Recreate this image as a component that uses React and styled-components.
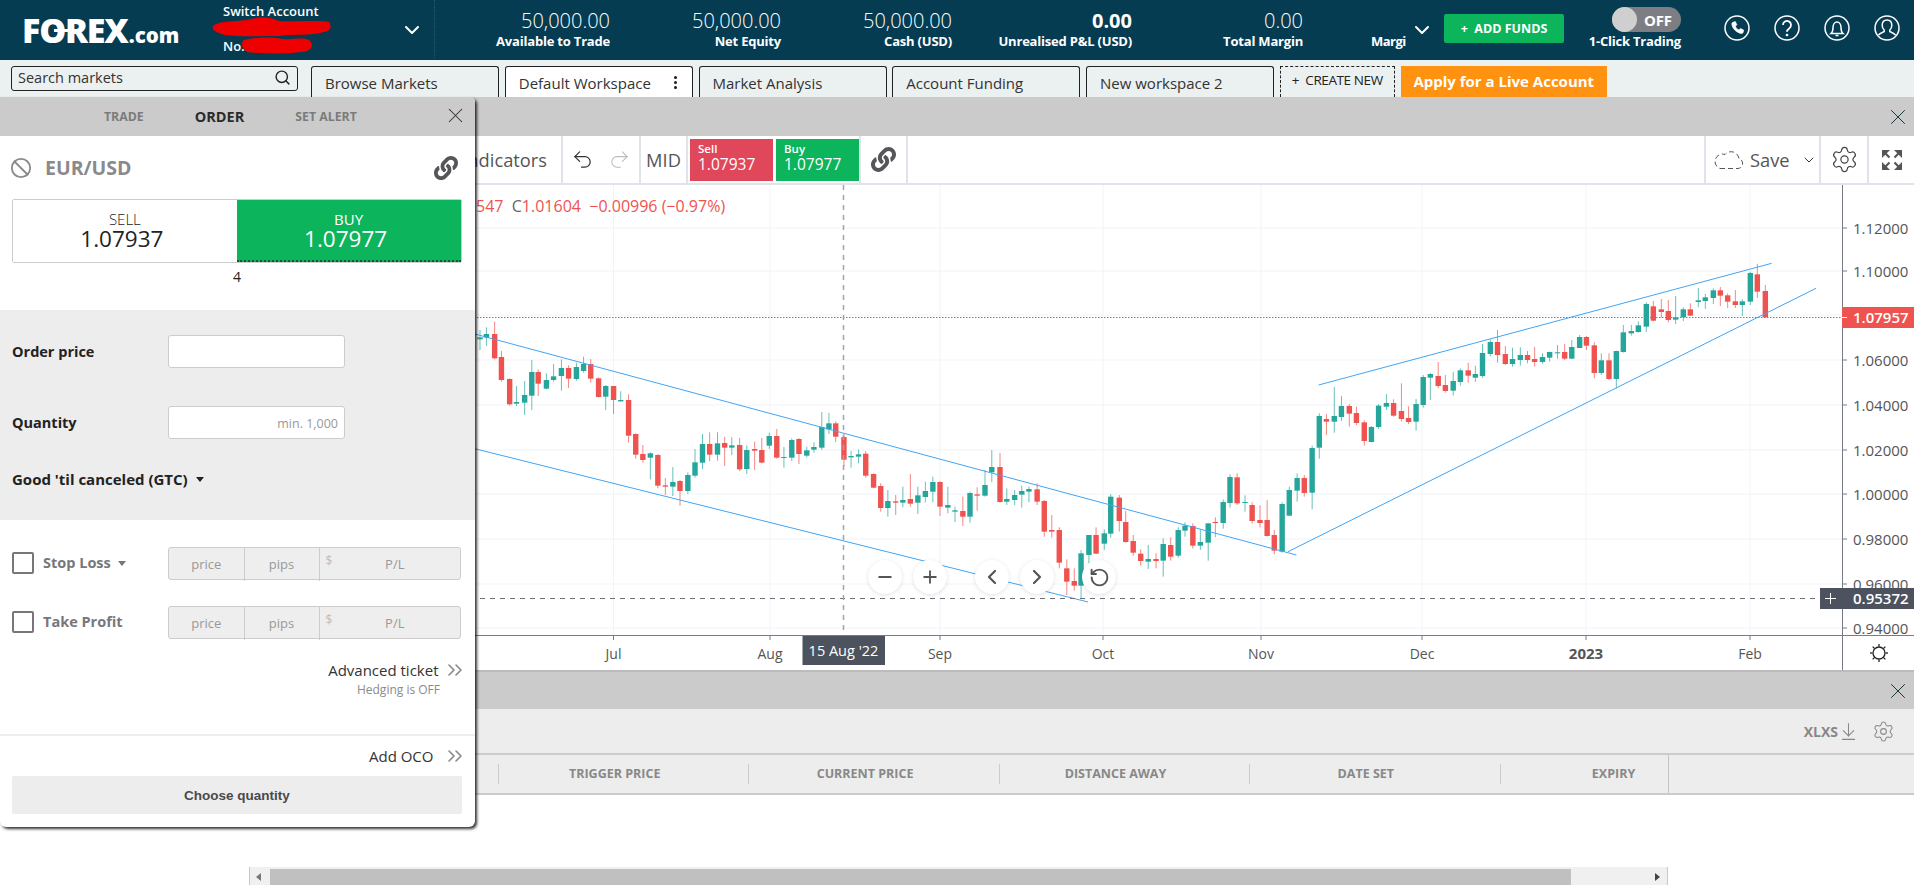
import styled, { createGlobalStyle } from 'styled-components';
import { X, Ban, Search, Undo2, Redo2, Settings, Minus, Plus, ChevronLeft, ChevronRight, RotateCcw, ChevronDown, ChevronsRight, ArrowDownToLine, EllipsisVertical } from 'lucide-react';
import { FaLink } from 'react-icons/fa';

const GlobalStyle = createGlobalStyle`
  html, body { margin: 0; padding: 0; height: 100%; overflow: hidden; background: #fff; }
  body { font-family: "Open Sans", "Liberation Sans", sans-serif; color: #222; }
  * { box-sizing: border-box; }
`;

// candles read off the chart: [colour, x, high, bodyTop, bodyBottom, low]
const place = (rows, x0, sx, y0) =>
  rows.map(([c, x, h, t, b, l]) => ({ c, x: x0 + x / sx, h: y0 + h / 3, t: y0 + t / 3, b: y0 + b / 3, l: y0 + l / 3 }));

const candles = [
  ...place([
    ['g',0,90,112,118,150],['g',18,82,102,113,137],['r',41,65,102,175,178],['r',60,153,171,240,245],['r',83,235,237,313,317],
    ['g',102,258,306,311,318],['g',125,243,285,308,345],['g',145,180,216,287,330],['r',163,208,216,251,288],['g',186,220,240,266,268],
    ['g',206,192,229,240,245],['g',228,178,204,228,272],['r',248,196,204,236,264],['g',270,188,201,237,242],['g',290,170,192,213,218],
    ['r',310,177,192,236,248],['r',332,232,235,291,293],['g',352,255,258,290,330],['r',374,258,258,300,342],['g',394,274,300,304,306],
    ['r',416,283,300,407,428],['r',436,400,402,464,476],['r',456,435,462,480,488],['g',477,457,460,473,538],['r',498,462,465,557,565],
    ['r',519,534,556,560,585],['g',540,501,546,560,588],['r',560,540,543,573,617],['g',582,517,525,573,582],['g',602,447,487,527,533],
    ['g',623,402,432,488,507],['r',643,397,432,464,484],['g',665,397,430,464,482],['r',685,410,429,443,498],['g',705,412,436,443,465],
    ['r',727,414,435,508,513],['g',747,436,450,507,522],['r',769,425,447,452,510],['r',789,414,450,488,490],['g',810,398,408,437,447],
    ['r',831,387,408,473,476],['g',851,441,471,473,503],['g',873,415,420,473,483],['r',893,414,417,462,492],['g',915,440,451,467,472],
    ['g',935,427,441,449,458],['g',957,336,381,443,450],['g',977,339,370,388,402],['r',996,364,370,410,426],['r',1019,400,411,479,500],
    ['g',1039,453,468,472,503],['g',1060,448,463,470,490],['r',1080,453,461,527,533],['r',1102,520,522,563,565],['r',1122,550,558,624,635],
    ['g',1142,570,603,624,650],['r',1164,585,604,608,645],['g',1184,560,600,608,622],['r',1205,522,597,611,620],['g',1226,560,586,608,642],
    ['g',1247,545,573,591,607],['g',1268,530,546,575,607],['r',1288,544,546,620,648],['g',1310,560,615,623,640],['g',1330,620,631,635,666],
    ['r',1352,590,633,650,678],['g',1372,575,579,650,668],['r',1392,562,583,587,632],['g',1414,510,555,587,590],['g',1433,450,501,517,546],
    ['r',1456,459,501,606,608],['g',1475,565,597,605,615],['g',1497,570,585,600,615],['g',1517,557,573,584,623],['g',1537,560,567,575,607],
    ['r',1560,550,568,605,615],
  ], 480, 2.8, 300),
  ...place([
    ['r',12,780,783,875,890],['r',33,825,870,875,893],['r',54,862,870,968,985],['r',75,958,985,1025,1065],['r',96,985,1023,1037,1052],
    ['g',115,930,940,1037,1075],['g',137,885,885,945,970],['r',157,862,885,941,942],['g',180,868,880,911,930],['g',198,762,770,881,893],
    ['r',222,765,773,843,875],['r',240,813,846,906,908],['r',261,885,903,938,947],['r',282,928,941,963,977],['g',303,915,957,965,987],
    ['r',325,940,957,963,985],['g',345,895,912,962,1010],['r',366,892,915,950,962],['g',387,862,870,947,953],['g',406,847,857,872,890],
    ['r',428,850,858,917,926],['g',449,868,906,917,930],['g',471,850,850,908,962],['r',491,832,846,849,892],['g',513,778,786,849,866],
    ['g',532,703,711,789,803],['r',552,700,712,790,795],['g',574,766,786,789,815],['r',594,787,795,843,851],['r',616,796,840,849,862],
    ['r',636,780,840,888,890],['r',656,870,885,932,943],['g',678,787,792,935,938],['g',698,740,750,827,828],['g',720,700,714,752,785],
    ['r',740,705,714,759,770],['g',762,617,624,758,808],['g',782,520,528,623,656],['r',802,522,537,545,585],['g',824,441,528,545,578],
    ['g',844,468,498,531,543],['r',866,492,498,521,560],['r',886,500,519,549,555],['r',908,541,547,603,617],['g',928,558,561,606,607],
    ['g',948,492,497,561,567],['g',970,462,489,500,510],['r',990,478,489,527,530],['r',1012,430,513,537,545],['r',1032,499,534,546,552],
    ['g',1053,477,492,545,572],['g',1073,405,411,495,503],['g',1093,399,402,413,480],['r',1115,366,408,438,445],['r',1135,405,435,453,458],
    ['g',1157,396,423,452,467],['g',1177,385,391,426,437],['r',1199,368,391,407,428],['g',1219,377,402,413,426],['g',1239,312,339,408,413],
    ['g',1261,298,306,342,349],['r',1281,270,306,345,368],['r',1303,318,342,372,375],['g',1323,323,357,372,380],['g',1345,322,345,360,377],
    ['r',1365,333,345,360,370],['r',1385,321,357,366,380],['g',1407,340,351,366,371],['g',1427,335,336,353,365],['g',1449,315,337,339,356],
    ['r',1469,312,336,356,360],['g',1489,300,321,356,357],['g',1511,285,291,324,324],['r',1530,288,291,317,330],['r',1552,307,316,399,415],
  ], 1040, 2.8, 240),
  ...place([
    ['g',304,520,541,579,585],['r',327,520,541,597,600],['g',349,512,513,597,625],['g',370,435,457,516,518],['g',394,435,453,460,467],
    ['g',415,424,436,456,458],['g',439,367,372,440,456],['r',460,363,379,422,424],['r',484,357,388,396,413],['r',505,360,393,420,427],
    ['g',527,348,412,419,432],['g',550,382,388,412,423],['r',571,370,388,407,408],['g',595,324,361,366,382],['g',616,342,352,363,387],
    ['g',640,325,331,354,372],['r',661,321,331,347,378],['r',683,340,346,365,384],['r',706,330,364,375,384],['g',727,358,364,375,408],
    ['g',751,275,279,365,375],['r',772,252,283,335,354],['r',796,315,333,412,412],
  ], 1500, 3, 180),
];

const trendLines = [
  [460, 330, 1296.4, 555],
  [460, 445, 1088, 602],
  [1318.6, 385, 1771.7, 263.3],
  [1288, 551.7, 1816, 288.3],
];

const priceTicks = [
  ['1.12000', 228], ['1.10000', 271], ['1.06000', 360], ['1.04000', 405], ['1.02000', 450],
  ['1.00000', 494], ['0.98000', 539], ['0.96000', 584], ['0.94000', 628],
];
const timeTicks = [['Jul', 613.5], ['Aug', 770], ['Sep', 940], ['Oct', 1103], ['Nov', 1261], ['Dec', 1422], ['2023', 1586], ['Feb', 1750]];

const stats = [
  { w: 175, value: '50,000.00', label: 'Available to Trade' },
  { w: 171, value: '50,000.00', label: 'Net Equity' },
  { w: 171, value: '50,000.00', label: 'Cash (USD)' },
  { w: 180, value: '0.00', label: 'Unrealised P&L (USD)', strong: true },
  { w: 171, value: '0.00', label: 'Total Margin' },
];

const workspaceTabs = ['Browse Markets', 'Default Workspace', 'Market Analysis', 'Account Funding', 'New workspace 2'];
const columns = ['TRIGGER PRICE', 'CURRENT PRICE', 'DISTANCE AWAY', 'DATE SET'];

const Page = styled.div`
  position: relative;
  height: 885px;
  width: 1914px;
  overflow: hidden;
  display: flex;
  flex-direction: column;
`;

const TopBar = styled.header`
  height: 60px;
  flex: none;
  background: #053c52;
  color: #fff;
  display: flex;
  align-items: stretch;
`;

const LogoSlot = styled.div`
  width: 223px;
  padding-left: 22px;
  display: flex;
  align-items: center;
`;

const Logo = styled.div`
  display: flex;
  align-items: baseline;
  font-weight: 800;
  font-size: 34px;
  letter-spacing: -1.2px;
  line-height: 1;
  span { font-size: 20.5px; letter-spacing: 0; margin-left: 1px; }
`;

const LogoO = styled.b`
  position: relative;
  font-weight: 800;
  &::after {
    content: '';
    position: absolute;
    left: 15px;
    right: -3px;
    top: 16px;
    height: 3px;
    background: #fff;
  }
`;

const Account = styled.div`
  position: relative;
  width: 212px;
  border-right: 1px dotted #2a5a6e;
  margin-bottom: 2px;
  font-size: 13px;
  font-weight: 600;
  line-height: 18px;
  padding-top: 2px;
  display: flex;
  flex-direction: column;
`;

const RedactedLine = styled.div`
  height: 17px;
`;

const Scribble = styled.svg`
  position: absolute;
  left: -12px;
  top: 16px;
`;

const AccountCaret = styled(ChevronDown)`
  position: absolute;
  left: 177px;
  top: 18px;
`;

const Stat = styled.div`
  width: ${(p) => p.$w}px;
  flex: none;
  text-align: right;
  padding-top: 9px;
`;

const StatValue = styled.div`
  font-size: 20px;
  font-weight: ${(p) => (p.$strong ? 700 : 300)};
  line-height: 24px;
`;

const StatLabel = styled.div`
  font-size: 13px;
  font-weight: 700;
  line-height: 17px;
  letter-spacing: -0.2px;
`;

const CutLabel = styled(StatLabel)`
  width: 32px;
  flex: none;
  margin: 33px 0 0 68px;
  white-space: nowrap;
  letter-spacing: -0.5px;
`;

const TopCaret = styled(ChevronDown)`
  margin: 18px 0 0 7px;
  flex: none;
`;

const AddFunds = styled.button`
  width: 120px;
  height: 29px;
  margin: 14px 0 0 10px;
  border: 0;
  border-radius: 2px;
  background: #0cb45c;
  color: #fff;
  font: 700 12.5px "Open Sans", sans-serif;
`;

const OneClick = styled.div`
  width: 92px;
  margin: 7px 0 0 25px;
  display: flex;
  flex-direction: column;
  align-items: flex-end;
  font-size: 13px;
  line-height: 18px;
  font-weight: 700;
  letter-spacing: -0.2px;
  white-space: nowrap;
`;

const Toggle = styled.div`
  width: 69px;
  height: 25px;
  border-radius: 13px;
  background: #7d7e84;
  display: flex;
  align-items: center;
  font-size: 15px;
`;

const Knob = styled.i`
  width: 25px;
  height: 25px;
  border-radius: 50%;
  background: #cfcfcf;
  margin-right: 7px;
`;

const TopIcons = styled.div`
  margin: 15px 0 0 43px;
  display: flex;
  gap: 24px;
`;

const RoundIcon = styled.svg`
  width: 26px;
  height: 26px;
  fill: none;
  stroke: #fff;
  stroke-width: 1.5;
`;

const TabRow = styled.nav`
  height: 37px;
  flex: none;
  background: #ebf0f0;
  padding: 6px 0 0 11px;
  display: flex;
  align-items: flex-start;
  font-size: 15px;
`;

const SearchBox = styled.div`
  width: 287px;
  height: 25px;
  border: 1px solid #222;
  border-radius: 3px;
  padding: 0 6px 2px;
  margin-right: 13px;
  display: flex;
  align-items: center;
  justify-content: space-between;
  font-size: 14.5px;
  color: #333;
`;

const Tab = styled.div`
  width: 188px;
  height: 31px;
  margin-right: 5.75px;
  padding: 1px 13px 0;
  border: 1px solid #222;
  border-bottom: 0;
  border-radius: 3px 3px 0 0;
  background: ${(p) => (p.$active ? '#fff' : '#ebf0f0')};
  display: flex;
  justify-content: space-between;
  align-items: center;
  white-space: nowrap;
  color: #333;
  svg { margin-right: -5px; }
`;

const CreateNew = styled.div`
  width: 115px;
  height: 31px;
  margin-right: 6px;
  padding-bottom: 4px;
  border: 1px dashed #222;
  border-bottom: 0;
  font-size: 13.5px;
  display: flex;
  align-items: center;
  justify-content: center;
  white-space: nowrap;
  letter-spacing: -0.4px;
`;

const ApplyLive = styled.div`
  width: 206px;
  height: 31px;
  padding-bottom: 2px;
  background: #ff9211;
  color: #fff;
  font-size: 15px;
  font-weight: 700;
  display: flex;
  align-items: center;
  justify-content: center;
`;

const GreyBar = styled.div`
  height: ${(p) => p.$h}px;
  flex: none;
  background: #cbcbcb;
  border-top: ${(p) => (p.$edge ? '2px solid #bcbcbc' : '0')};
  display: flex;
  align-items: center;
  justify-content: flex-end;
  padding-right: 3px;
`;

const ChartToolbar = styled.div`
  height: 49px;
  flex: none;
  display: flex;
  align-items: stretch;
  border-bottom: 2px solid #e0e3eb;
  background: #fff;
  color: #555;
`;

const ToolGroup = styled.div`
  width: ${(p) => p.$w}px;
  flex: none;
  display: flex;
  align-items: center;
  justify-content: ${(p) => p.$justify || 'center'};
  gap: ${(p) => p.$gap || 0}px;
  padding: ${(p) => p.$pad || 0};
  border-right: ${(p) => (p.$noBorder ? '0' : '2px solid #e0e3eb')};
  font-size: 18.3px;
  white-space: nowrap;
`;

const ToolSpacer = styled.div`
  flex: 1;
  border-right: 2px solid #e0e3eb;
`;

const PriceChip = styled.div`
  width: 83px;
  height: 42px;
  background: ${(p) => p.$bg};
  color: #fff;
  padding: 4px 8px;
  font-size: 15.5px;
  line-height: 18px;
  small { display: block; font-size: 11.5px; line-height: 12px; font-weight: 600; }
`;

const SaveCaret = styled(ChevronDown)`
  margin-left: 6px;
`;

const ChartArea = styled.div`
  position: relative;
  height: 485px;
  flex: none;
  background: #fff;
  svg.chart { display: block; }
`;

const AxisText = styled.text`
  font-family: "Open Sans", sans-serif;
  font-size: ${(p) => p.$size || 15}px;
  fill: ${(p) => p.$fill || '#555'};
  font-weight: ${(p) => p.$weight || 400};
`;

const Legend = styled.div`
  position: absolute;
  left: 476px;
  top: 10px;
  font-size: 16px;
  color: #ef5350;
  white-space: pre;
  em { font-style: normal; color: #666; }
`;

const ZoomBar = styled.div`
  position: absolute;
  left: 868px;
  top: 375px;
  display: flex;
  gap: 11px;
`;

const ZoomButton = styled.button`
  width: 34px;
  height: 34px;
  padding: 0;
  border: 0;
  border-radius: 50%;
  background: #fff;
  color: #555;
  box-shadow: 0 1px 4px rgba(0, 0, 0, 0.12);
  display: flex;
  align-items: center;
  justify-content: center;
  margin-left: ${(p) => (p.$apart ? '17px' : 0)};
`;

const OrdersToolbar = styled.div`
  height: 44px;
  flex: none;
  background: #ededed;
  display: flex;
  align-items: center;
  justify-content: flex-end;
  gap: 13px;
  padding-right: 19px;
  color: #888;
  font-size: 14px;
  font-weight: 700;
`;

const XlxsLink = styled.div`
  display: flex;
  align-items: center;
`;

const OrdersHead = styled.div`
  height: 42px;
  flex: none;
  background: #ededed;
  border-top: 2px solid #ccc;
  border-bottom: 2px solid #ccc;
  display: grid;
  grid-template-columns: 498px repeat(4, 250.4px) 168px 1fr;
  align-items: center;
  color: #888;
  font-size: 12.5px;
  font-weight: 700;
`;

const HeadCell = styled.div`
  height: 20px;
  line-height: 20px;
  border-left: ${(p) => (p.$first ? '0' : '1px solid #ccc')};
  text-align: center;
  white-space: nowrap;
  padding: 0 ${(p) => p.$right || 18}px 0 ${(p) => p.$left || 0}px;
`;

const HeadEnd = styled.div`
  align-self: stretch;
  border-left: 1px solid #c4c4c4;
`;

const OrdersBody = styled.div`
  flex: 1;
  background: #fff;
`;

const ScrollTrack = styled.div`
  height: 18px;
  flex: none;
  margin-left: 249px;
  width: 1419px;
  background: #f0f0f0;
  border-right: 1px solid #c8c8c8;
  border-left: 1px solid #c8c8c8;
  padding-top: 2px;
  display: flex;
  align-items: center;
`;

const ScrollThumb = styled.div`
  flex: 1;
  height: 16px;
  background: #c0c0c0;
  margin: 0 96px 0 20px;
`;

const ScrollArrow = styled.i`
  position: absolute;
  left: ${(p) => (p.$right ? '1655px' : '256px')};
  border: 4px solid transparent;
  border-right: ${(p) => (p.$right ? '0' : '5px solid #777')};
  border-left: ${(p) => (p.$right ? '5px solid #444' : '0')};
`;

const OrderPanel = styled.aside`
  position: absolute;
  left: 0;
  top: 97px;
  width: 475px;
  height: 730px;
  background: #fff;
  border-radius: 0 5px 6px 6px;
  box-shadow: 2px 2px 3px rgba(0, 0, 0, 0.8);
  display: flex;
  flex-direction: column;
  overflow: hidden;
`;

const PanelTabs = styled.div`
  height: 39px;
  flex: none;
  background: #cbcbcb;
  padding: 0 7px 0 104px;
  display: flex;
  align-items: center;
  gap: 51px;
`;

const PanelTab = styled.div`
  font-size: ${(p) => (p.$active ? 14.5 : 12.3)}px;
  font-weight: 700;
  color: ${(p) => (p.$active ? '#2b2b2b' : '#7b7b7b')};
`;

const PanelClose = styled(X)`
  margin-left: auto;
  margin-top: -3px;
  color: #333;
`;

const SymbolRow = styled.div`
  height: 63px;
  flex: none;
  padding: 0 17px 0 10px;
  display: flex;
  align-items: center;
  gap: 13px;
  font-size: 19.5px;
  font-weight: 700;
  color: #8a8a8c;
  svg:last-child { margin-left: auto; color: #55565a; }
`;

const QuoteBox = styled.div`
  height: 64px;
  flex: none;
  margin: 0 13.5px 0 12px;
  border: 1px solid #ccc;
  border-radius: 2px;
  display: grid;
  grid-template-columns: 1fr 1fr;
  text-align: center;
`;

const Quote = styled.div`
  padding-top: 12px;
  font-size: 15px;
  font-weight: ${(p) => (p.$buy ? 400 : 300)};
  line-height: 15px;
  color: ${(p) => (p.$buy ? '#fff' : '#222')};
  background: ${(p) => (p.$buy ? '#0cb45c' : '#fff')};
  border-bottom: ${(p) => (p.$buy ? '2px dotted #0a5c33' : 0)};
  b { display: block; font-size: 22.5px; font-weight: 400; line-height: 24px; padding-right: 6px; }
`;

const Spread = styled.div`
  height: 28px;
  margin-bottom: 19px;
  flex: none;
  text-align: center;
  font-size: 14px;
  line-height: 28px;
  padding-right: 1px;
`;

const FormBlock = styled.div`
  height: 210px;
  flex: none;
  background: #ededed;
  padding: 25px 12px 0;
`;

const FormRow = styled.div`
  display: flex;
  align-items: center;
  height: 33px;
  margin-bottom: 38px;
`;

const FormLabel = styled.label`
  width: 156px;
  flex: none;
  font-size: 14.5px;
  font-weight: 700;
  color: #222;
`;

const FormInput = styled.div`
  width: 177px;
  height: 33px;
  background: #fff;
  border: 1px solid #ccc;
  border-radius: 3px;
  padding: 2px 6px 0 0;
  text-align: right;
  font-size: 12.5px;
  line-height: 30px;
  color: #999;
`;

const Expiry = styled.div`
  margin-top: -8px;
  font-size: 15px;
  font-weight: 700;
  color: #222;
  display: flex;
  align-items: center;
  gap: 8px;
`;

const Caret = styled.i`
  border: 4.5px solid transparent;
  border-top: 5.5px solid ${(p) => p.$color || '#222'};
  border-bottom: 0;
  margin-top: ${(p) => p.$top || 0}px;
`;

const BracketRow = styled.div`
  height: 34px;
  margin: ${(p) => p.$top}px 14px 0 12px;
  flex: none;
  display: flex;
  align-items: center;
`;

const CheckBox = styled.i`
  width: 22px;
  height: 22px;
  flex: none;
  border: 2px solid #77777b;
  border-radius: 2px;
  margin-right: 9px;
`;

const BracketLabel = styled.div`
  width: 125px;
  flex: none;
  padding-bottom: 2px;
  display: flex;
  align-items: center;
  gap: 7px;
  font-size: 14.5px;
  font-weight: 700;
  color: #77777b;
`;

const BracketFields = styled.div`
  flex: 1;
  height: 33px;
  display: grid;
  grid-template-columns: 74.5px 75px 1fr;
  background: #eee;
  border: 1px solid #ccc;
  border-radius: 3px;
  font-size: 13px;
  color: #999;
`;

const BracketCell = styled.div`
  position: relative;
  text-align: center;
  line-height: 33px;
  border-left: ${(p) => (p.$first ? 0 : '1px solid #ccc')};
  padding-left: ${(p) => (p.$pl ? '10px' : 0)};
  span { position: absolute; left: 6px; top: -4px; font-size: 12px; color: #bbb; }
`;

const LinkRow = styled.div`
  display: flex;
  align-items: center;
  justify-content: flex-end;
  gap: ${(p) => p.$gap}px;
  padding-right: 8px;
  height: 22px;
  margin-top: ${(p) => p.$top}px;
  flex: none;
  font-size: 15px;
  color: #333;
  svg { color: #888; }
`;

const Hedging = styled.div`
  text-align: right;
  padding-right: 35px;
  font-size: 12px;
  line-height: 18px;
  color: #8a8a8a;
  flex: none;
`;

const PanelRule = styled.div`
  height: 2px;
  flex: none;
  margin-top: 35px;
  background: #eee;
`;

const ChooseQuantity = styled.button`
  height: 38px;
  flex: none;
  margin: 9px 13px 0 12px;
  border: 0;
  border-radius: 2px;
  background: #ededed;
  color: #4a4a4a;
  font: 700 13.5px "Liberation Sans", Arial, sans-serif;
`;

const ExpandGlyph = () => (
  <svg width="24" height="24" viewBox="0 0 24 24" fill="#555" stroke="#555" strokeWidth="2.2">
    {[0, 90, 180, 270].map((r) => (
      <g key={r} transform={`rotate(${r} 12 12)`}>
        <polygon points="2,2 10,2 2,10" strokeWidth="0" />
        <line x1="4" y1="4" x2="9.5" y2="9.5" />
      </g>
    ))}
  </svg>
);

const DashedCloud = () => (
  <svg width="32" height="20" viewBox="0 0 32 20" fill="none" stroke="#555" strokeWidth="1" strokeDasharray="5 3">
    <path d="M7 18.5h18a5 5 0 0 0 1-9.800A8 8 0 0 0 12 4.500 6.800 6.800 0 0 0 7 18.500z" />
  </svg>
);

const Chart = () => (
  <svg className="chart" width="1914" height="485" viewBox="0 185 1914 485">
    {priceTicks.map(([, y]) => <line key={y} x1="0" x2="1842" y1={y} y2={y} stroke="#f0f3fa" />)}
    <line x1="0" x2="1842" y1="315" y2="315" stroke="#f0f3fa" />
    {timeTicks.map(([, x]) => <line key={x} x1={x} x2={x} y1="185" y2="635" stroke="#f0f3fa" />)}

    {candles.map((k, i) => {
      const colour = k.c === 'g' ? '#26a69a' : '#ef5350';
      return (
        <g key={i}>
          <line x1={k.x} x2={k.x} y1={k.h} y2={k.l} stroke={colour} strokeOpacity="0.7" />
          <rect x={k.x - 2.7} y={k.t} width="5.4" height={Math.max(k.b - k.t, 1)} fill={colour} />
        </g>
      );
    })}

    {trendLines.map(([x1, y1, x2, y2], i) => (
      <line key={i} x1={x1} y1={y1} x2={x2} y2={y2} stroke="#42a5f5" strokeWidth="1" />
    ))}

    <line x1="0" x2="1842" y1="317.5" y2="317.5" stroke="#ef5350" strokeDasharray="1.5 1.5" />
    <line x1="0" x2="1820" y1="598.5" y2="598.5" stroke="#6b6f78" strokeDasharray="5 5" />
    <line x1="843.5" x2="843.5" y1="185" y2="635" stroke="#a0a3aa" strokeWidth="1.5" strokeDasharray="5 5" />

    <line x1="0" x2="1914" y1="635.5" y2="635.5" stroke="#787b86" />
    <line x1="1842.5" x2="1842.5" y1="185" y2="670" stroke="#787b86" />
    {timeTicks.map(([label, x]) => (
      <g key={label}>
        <line x1={x} x2={x} y1="635" y2="640" stroke="#787b86" />
        <AxisText x={x} y="659" textAnchor="middle" $size={label === '2023' ? 15 : 14} $weight={label === '2023' ? 700 : 400}>{label}</AxisText>
      </g>
    ))}
    {priceTicks.map(([label, y]) => (
      <g key={label}>
        <line x1="1842" x2="1847" y1={y} y2={y} stroke="#787b86" />
        <AxisText x="1853" y={y + 6}>{label}</AxisText>
      </g>
    ))}

    <rect x="1842" y="307" width="72" height="21" fill="#ef5350" />
    <line x1="1842" x2="1847" y1="317.5" y2="317.5" stroke="#fff" />
    <AxisText x="1853" y="323" $fill="#fff" $weight={600}>1.07957</AxisText>

    <rect x="1820" y="588" width="22" height="21" fill="#4c525e" />
    <path d="M1825 598.500h11M1830.500 593v11" stroke="#fff" />
    <rect x="1842" y="588" width="72" height="21" fill="#4c525e" />
    <AxisText x="1853" y="604" $fill="#fff" $weight={600}>0.95372</AxisText>

    <rect x="802.5" y="636" width="82.5" height="29" fill="#4c525e" />
    <AxisText x="843.5" y="656" textAnchor="middle" $fill="#fff" $size={14.5}>15 Aug '22</AxisText>

    <g stroke="#222" strokeWidth="1.3" fill="none" transform="translate(1879 653)">
      <circle r="6" />
      {[0, 45, 90, 135, 180, 225, 270, 315].map((a) => (
        <line key={a} x1="0" x2="0" y1="-6.5" y2="-9" transform={`rotate(${a})`} />
      ))}
    </g>
  </svg>
);

const App = () => {
  return (
    <Page>
      <GlobalStyle />

      <TopBar>
        <LogoSlot>
          <Logo>F<LogoO>O</LogoO>REX<span>.com</span></Logo>
        </LogoSlot>
        <Account>
          <div>Switch Account</div>
          <RedactedLine />
          <div>No.</div>
          <Scribble width="122" height="40" viewBox="0 0 122 40" fill="#ee0000">
            <path d="M2 10 C8 4 30 6 40 3 C50 0 62 2 68 5 C84 6 108 4 118 6 C122 12 118 16 112 16 C104 20 76 18 68 20 C50 20 30 21 14 19 C6 17 0 14 2 10 Z" />
            <path d="M33 24 C50 20 66 22 72 23 C84 24 96 20 100 26 C103 32 98 36 90 36 C74 38 50 38 36 36 C30 32 30 27 33 24 Z" />
          </Scribble>
          <AccountCaret size={24} strokeWidth={2} />
        </Account>
        {stats.map((s) => (
          <Stat key={s.label} $w={s.w}>
            <StatValue $strong={s.strong}>{s.value}</StatValue>
            <StatLabel>{s.label}</StatLabel>
          </Stat>
        ))}
        <CutLabel>Margi</CutLabel>
        <TopCaret size={24} strokeWidth={2} />
        <AddFunds>+&nbsp;&nbsp;ADD FUNDS</AddFunds>
        <OneClick>
          <Toggle><Knob />OFF</Toggle>
          1-Click Trading
        </OneClick>
        <TopIcons>
          <RoundIcon viewBox="0 0 26 26">
            <circle cx="13" cy="13" r="12" />
            <path fill="#fff" strokeWidth="0.6" d="M9 7.200l2.300-.7 1.600 3.300-1.500 1.500c.7 1.700 1.700 2.800 3.500 3.600l1.500-1.500 3.300 1.700-.6 2.300c-.3.8-1.300 1.300-2.200 1.100C11.500 17 8.300 13 7.800 9.200c-.1-.9.4-1.700 1.200-2z" />
          </RoundIcon>
          <RoundIcon viewBox="0 0 26 26">
            <circle cx="13" cy="13" r="12" />
            <path d="M9 10a4 4 0 1 1 6.400 3.200c-1.500 1-2.400 1.700-2.400 3.600" strokeWidth="1.8" />
            <circle cx="13" cy="20" r="0.6" />
          </RoundIcon>
          <RoundIcon viewBox="0 0 26 26">
            <circle cx="13" cy="13" r="12" />
            <path d="M7 18.500h12c-1.500-1.200-2-2.500-2-6 0-3-1.700-5.500-4-5.500s-4 2.500-4 5.500c0 3.500-.5 4.800-2 6zM11.500 20.500h3" />
          </RoundIcon>
          <RoundIcon viewBox="0 0 26 26">
            <circle cx="13" cy="13" r="12" />
            <path d="M13 5c-3 0-4.800 2.300-4.800 5.300 0 2 .8 3.700 2 4.700v1.500c-2.200 1-4.500 1.800-5.700 3.500M13 5c3 0 4.800 2.300 4.800 5.300 0 2-.8 3.700-2 4.700v1.500c2.200 1 4.500 1.800 5.700 3.500" />
          </RoundIcon>
        </TopIcons>
      </TopBar>

      <TabRow>
        <SearchBox>Search markets<Search size={17} color="#222" /></SearchBox>
        {workspaceTabs.map((t, i) => (
          <Tab key={t} $active={i === 1}>
            {t}
            {i === 1 && <EllipsisVertical size={17} strokeWidth={2.4} color="#222" />}
          </Tab>
        ))}
        <CreateNew>+&nbsp;&nbsp;CREATE NEW</CreateNew>
        <ApplyLive>Apply for a Live Account</ApplyLive>
      </TabRow>

      <GreyBar $h={39}><X size={26} strokeWidth={0.9} color="#123434" /></GreyBar>
      <ChartToolbar>
        <ToolGroup $w={563} $justify="flex-end" $pad="0 14px 0 0">Indicators</ToolGroup>
        <ToolGroup $w={78} $gap={14}>
          <Undo2 size={23} strokeWidth={1.3} color="#333" />
          <Redo2 size={23} strokeWidth={1.1} color="#bbb" />
        </ToolGroup>
        <ToolGroup $w={47}>MID</ToolGroup>
        <ToolGroup $w={173} $gap={3} $justify="flex-start" $pad="0 0 0 2px">
          <PriceChip $bg="#e0475b"><small>Sell</small>1.07937</PriceChip>
          <PriceChip $bg="#0cb45c"><small>Buy</small>1.07977</PriceChip>
        </ToolGroup>
        <ToolGroup $w={47}><FaLink size={25} color="#55565a" /></ToolGroup>
        <ToolSpacer />
        <ToolGroup $w={115} $gap={5} $justify="flex-start" $pad="0 0 0 7px">
          <DashedCloud />Save<SaveCaret size={16} strokeWidth={1.5} color="#333" />
        </ToolGroup>
        <ToolGroup $w={48}><Settings size={29} strokeWidth={1} color="#444" /></ToolGroup>
        <ToolGroup $w={45} $noBorder><ExpandGlyph /></ToolGroup>
      </ChartToolbar>
      <ChartArea>
        <Chart />
        <Legend>547  <em>C</em>1.01604  −0.00996 (−0.97%)</Legend>
        <ZoomBar>
          <ZoomButton><Minus size={20} strokeWidth={2.2} /></ZoomButton>
          <ZoomButton><Plus size={20} strokeWidth={2.2} /></ZoomButton>
          <ZoomButton $apart><ChevronLeft size={24} strokeWidth={2.2} /></ZoomButton>
          <ZoomButton><ChevronRight size={24} strokeWidth={2.2} /></ZoomButton>
          <ZoomButton $apart><RotateCcw size={21} strokeWidth={2.2} /></ZoomButton>
        </ZoomBar>
      </ChartArea>

      <GreyBar $h={39} $edge><X size={26} strokeWidth={0.9} color="#123434" /></GreyBar>
      <OrdersToolbar>
        <XlxsLink>XLXS<ArrowDownToLine size={21} strokeWidth={1.2} /></XlxsLink>
        <Settings size={23} strokeWidth={1.1} />
      </OrdersToolbar>
      <OrdersHead>
        <HeadCell $first />
        {columns.map((c) => <HeadCell key={c}>{c}</HeadCell>)}
        <HeadCell $left={60} $right={1}>EXPIRY</HeadCell>
        <HeadEnd />
      </OrdersHead>
      <OrdersBody />
      <ScrollTrack>
        <ScrollArrow />
        <ScrollThumb />
        <ScrollArrow $right />
      </ScrollTrack>

      <OrderPanel>
        <PanelTabs>
          <PanelTab>TRADE</PanelTab>
          <PanelTab $active>ORDER</PanelTab>
          <PanelTab>SET ALERT</PanelTab>
          <PanelClose size={25} strokeWidth={1} />
        </PanelTabs>
        <SymbolRow>
          <Ban size={22} strokeWidth={2} />
          EUR/USD
          <FaLink size={24} />
        </SymbolRow>
        <QuoteBox>
          <Quote>SELL<b>1.07937</b></Quote>
          <Quote $buy>BUY<b>1.07977</b></Quote>
        </QuoteBox>
        <Spread>4</Spread>
        <FormBlock>
          <FormRow>
            <FormLabel>Order price</FormLabel>
            <FormInput />
          </FormRow>
          <FormRow>
            <FormLabel>Quantity</FormLabel>
            <FormInput>min. 1,000</FormInput>
          </FormRow>
          <Expiry>Good 'til canceled (GTC)<Caret /></Expiry>
        </FormBlock>
        <BracketRow $top={26}>
          <CheckBox />
          <BracketLabel>Stop Loss<Caret $color="#77777b" $top={2} /></BracketLabel>
          <BracketFields>
            <BracketCell $first>price</BracketCell>
            <BracketCell>pips</BracketCell>
            <BracketCell $pl><span>$</span>P/L</BracketCell>
          </BracketFields>
        </BracketRow>
        <BracketRow $top={25}>
          <CheckBox />
          <BracketLabel>Take Profit</BracketLabel>
          <BracketFields>
            <BracketCell $first>price</BracketCell>
            <BracketCell>pips</BracketCell>
            <BracketCell $pl><span>$</span>P/L</BracketCell>
          </BracketFields>
        </BracketRow>
        <LinkRow $top={20} $gap={4.5}>Advanced ticket<ChevronsRight size={24} strokeWidth={1.6} /></LinkRow>
        <Hedging>Hedging is OFF</Hedging>
        <PanelRule />
        <LinkRow $top={9} $gap={9.5}>Add OCO<ChevronsRight size={24} strokeWidth={1.6} /></LinkRow>
        <ChooseQuantity>Choose quantity</ChooseQuantity>
      </OrderPanel>
    </Page>
  );
};

export default App;
